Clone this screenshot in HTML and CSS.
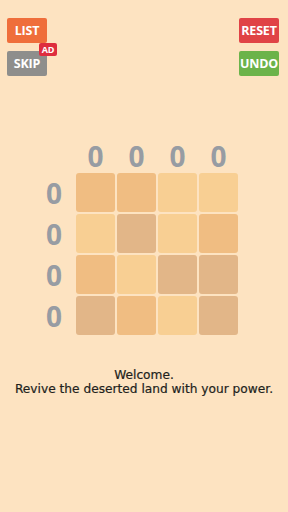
FILE: index.html
```html
<!DOCTYPE html>
<html lang="en">
  <head>
    <meta charset="UTF-8">
    <meta name="viewport" content="width=device-width, initial-scale=1.0">
    <title>Revive</title>
    <link rel="stylesheet" href="styles.css">
  </head>
  <body>

    <div id="topbar">
      <div class="side">
        <div class="btn list">LIST</div>
        <div class="btn skip">SKIP<span class="ad">AD</span></div>
      </div>
      <div class="side">
        <div class="btn reset">RESET</div>
        <div class="btn undo">UNDO</div>
      </div>
    </div>

    <div id="board">
      <div class="hint"></div>
      <div class="hint">0</div>
      <div class="hint">0</div>
      <div class="hint">0</div>
      <div class="hint">0</div>

      <div class="hint">0</div>
      <div class="cell a"></div>
      <div class="cell a"></div>
      <div class="cell b"></div>
      <div class="cell b"></div>

      <div class="hint">0</div>
      <div class="cell b"></div>
      <div class="cell c"></div>
      <div class="cell b"></div>
      <div class="cell a"></div>

      <div class="hint">0</div>
      <div class="cell a"></div>
      <div class="cell b"></div>
      <div class="cell c"></div>
      <div class="cell c"></div>

      <div class="hint">0</div>
      <div class="cell c"></div>
      <div class="cell a"></div>
      <div class="cell b"></div>
      <div class="cell c"></div>
    </div>

    <div id="message">
      Welcome.<br>
      Revive the deserted land with your power.
    </div>

  </body>
</html>
```

FILE: styles.css
```css
html, body {
  margin: 0;
  padding: 0;
  box-sizing: border-box;
}
*, *:before, *:after {
  box-sizing: inherit;
}
body {
  width: 288px;
  height: 512px;
  display: flex;
  flex-direction: column;
  background-color: #fde3c1;
  font-family: 'Open Sans', sans-serif;
}
#topbar {
  display: flex;
  justify-content: space-between;
  padding: 18px 9px 0 7px;
}
.side {
  display: flex;
  flex-direction: column;
  gap: 8px;
}
.btn {
  position: relative;
  width: 40px;
  height: 25px;
  border-radius: 2px;
  display: flex;
  align-items: center;
  justify-content: center;
  color: #fff;
  font-weight: bold;
  font-size: 12.5px;
  letter-spacing: -0.2px;
}
.list {
  background-color: #ef6e3b;
}
.skip {
  background-color: #8e8e8c;
}
.reset {
  background-color: #e04346;
}
.undo {
  background-color: #6cb34a;
}
.ad {
  position: absolute;
  top: -8px;
  right: -10px;
  width: 18px;
  height: 13px;
  border-radius: 2px;
  background-color: #de2d3e;
  font-size: 9px;
  line-height: 13px;
  text-align: center;
}
#board {
  display: grid;
  grid-template-columns: 40px repeat(4, 39px);
  grid-template-rows: 30px repeat(4, 39px);
  gap: 2px;
  margin: 65px 0 0 34px;
}
.hint {
  display: flex;
  align-items: center;
  justify-content: center;
  color: #979ca3;
  font-size: 28px;
  font-weight: bold;
  line-height: 1;
}
.cell {
  border-radius: 3px;
}
.cell.a {
  background-color: #f0bd82;
}
.cell.b {
  background-color: #f8cf93;
}
.cell.c {
  background-color: #e2b688;
}
#message {
  margin-top: 33px;
  text-align: center;
  font-family: 'DejaVu Sans', sans-serif;
  font-size: 12.2px;
  line-height: 14px;
  color: #221f1c;
  -webkit-text-stroke: 0.2px #221f1c;
}
```
